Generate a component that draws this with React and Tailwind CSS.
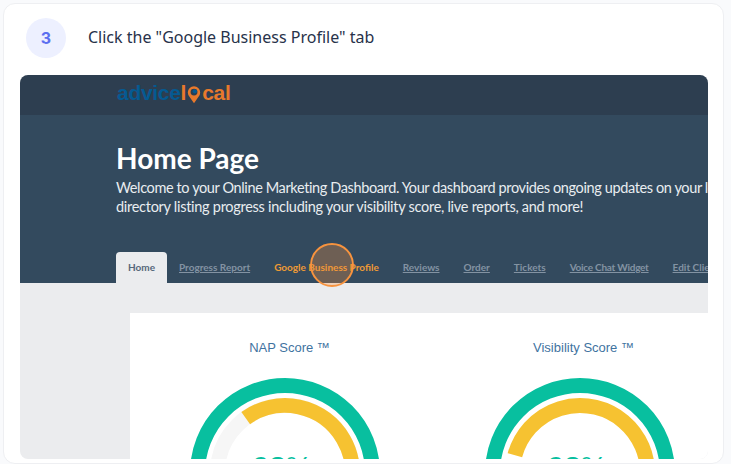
const source = { fontFamily: 'Lato, sans-serif' };

function Gauge({ start, track }) {
  // start: degrees from top (negative = left) where the yellow arc begins
  const cx = 100, cy = 100, r = 67.5;
  const a = (start * Math.PI) / 180;
  const x = cx + r * Math.sin(a), y = cy - r * Math.cos(a);
  const end = 155 * Math.PI / 180;
  const ex = cx + r * Math.sin(end), ey = cy - r * Math.cos(end);
  return (
    <div className="relative mx-auto mt-[17px] h-[86px] w-[200px] overflow-hidden">
      <svg width="200" height="200" viewBox="0 0 200 200" className="block">
        <circle cx="100" cy="100" r="87.5" fill="none" stroke="#08bf9f" strokeWidth="15" />
        {track && <circle cx="100" cy="100" r="67.5" fill="none" stroke="#f6f6f6" strokeWidth="15" />}
        <path d={`M ${x} ${y} A ${r} ${r} 0 1 1 ${ex} ${ey}`} fill="none" stroke="#f6c231" strokeWidth="15" />
      </svg>
      <div className="absolute left-0 right-0 top-[76px] pr-[5px] text-center text-[30px] leading-[36px] font-medium text-[#08bf9f]" style={{ fontFamily: 'Liberation Sans, sans-serif' }}>
        98%
      </div>
    </div>
  );
}

function Tab({ children, color = 'text-[#8393a3]', underline = true, extra = '' }) {
  return <span className={`mb-[2px] shrink-0 text-[10px] font-bold whitespace-nowrap ${color} ${underline ? 'underline' : ''} ${extra}`}>{children}</span>;
}

export default function App() {
  return (
    <div className="h-[464px] w-[731px] overflow-hidden bg-[#f9fafc] pt-[3px]">
      <div className="ml-[3px] h-[461px] w-[721px] rounded-[12px] border border-[#eeeff2] bg-white pl-[16px]">
        <div className="flex h-[71px] items-center gap-[22px] pb-[3px] pl-[6px]">
          <div className="flex h-10 w-10 items-center justify-center rounded-full bg-[#edf0ff] text-[16px] font-bold text-[#5c6ff0]" style={{ fontFamily: 'Inter, sans-serif' }}>3</div>
          <div className="mb-[3px] text-[16px] leading-[22px] text-[#27324a]" style={{ fontFamily: 'Noto Sans, sans-serif' }}>Click the "Google Business Profile" tab</div>
        </div>
        <div className="relative h-[384px] w-[688px] overflow-hidden rounded-[8px] bg-[#ebecee]">
          <div className="flex h-10 items-center bg-[#2d3e50] pb-[5px] pl-[97px]">
            <div className="flex items-center text-[21px] leading-none font-bold tracking-[-0.3px]" style={{ fontFamily: 'Liberation Sans, sans-serif' }}>
              <span className="text-[#055a92]">advice</span>
              <span className="text-[#e8792c]">l</span>
              <svg width="14" height="22" viewBox="0 0 17 24" className="mx-[1px] mt-[4px] block">
                <path d="M8.5 22 L3 14 A7.5 7.5 0 1 1 14 14 Z" fill="#e8792c" />
                <circle cx="8.5" cy="8.5" r="4.2" fill="#2d3e50" />
                <circle cx="9.5" cy="7.5" r="2.6" fill="#055a92" />
              </svg>
              <span className="text-[#e8792c]">cal</span>
            </div>
          </div>
          <div className="h-[168px] bg-[#334a5e] pl-[96px] pt-[26px]" style={source}>
            <div className="text-[28px] leading-[34px] font-bold text-white">Home Page</div>
            <div className="mt-[3px] whitespace-nowrap text-[14.5px] leading-[19px] text-[#e9edf0]">
              <div className="tracking-[-0.38px]">Welcome to your Online Marketing Dashboard. Your dashboard provides ongoing updates on your local</div>
              <div className="tracking-[-0.28px]">directory listing progress including your visibility score, live reports, and more!</div>
            </div>
            <div className="mt-[36px] flex h-[32px] items-center gap-[24px] whitespace-nowrap">
              <div className="-mr-[12px] flex h-[32px] w-[51px] shrink-0 items-center justify-center rounded-t-[4px] bg-[#ebecee] pb-[2px] text-[10px] font-bold text-[#56677a]">Home</div>
              <Tab>Progress Report</Tab>
              <Tab color="text-[#ee9a35]" underline={false}>Google Business Profile</Tab>
              <Tab>Reviews</Tab>
              <Tab>Order</Tab>
              <Tab>Tickets</Tab>
              <Tab extra="tracking-[-0.25px]">Voice Chat Widget</Tab>
              <Tab>Edit Client</Tab>
            </div>
          </div>
          <div className="ml-[110px] mt-[30px] flex h-[146px] bg-white" style={{ fontFamily: 'Liberation Sans, sans-serif' }}>
            <div className="w-[310px] shrink-0 pt-[27px]">
              <div className="pl-[9px] text-center text-[13px] leading-[16px] text-[#3f739f]">NAP Score ™</div>
              <Gauge start={-35.6} track />
            </div>
            <div className="w-[280px] shrink-0 pt-[27px]">
              <div className="pl-[7px] text-center text-[13px] leading-[16px] text-[#3f739f]">Visibility Score ™</div>
              <Gauge start={-74.7} />
            </div>
          </div>
          <div className="absolute left-[290px] top-[168px] h-11 w-11 rounded-full border-2 border-[#f7933e] bg-[#f7933e]/30" />
        </div>
      </div>
    </div>
  );
}
